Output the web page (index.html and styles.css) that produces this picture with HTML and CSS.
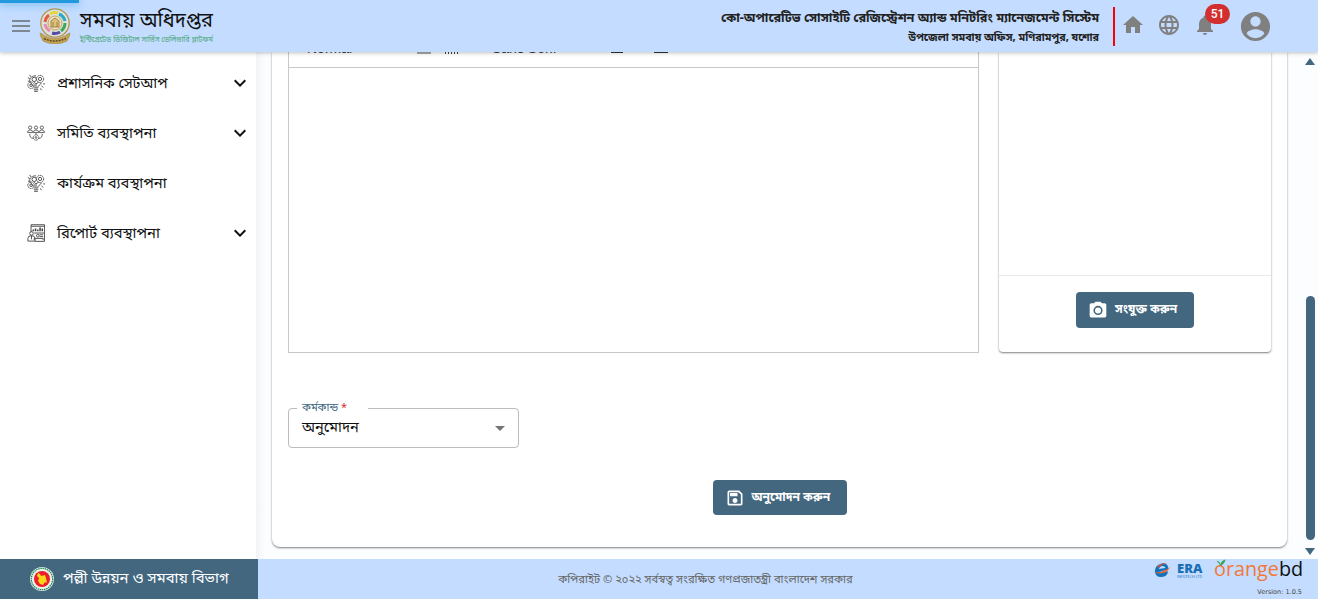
FILE: index.html
```html
<!DOCTYPE html>
<html lang="bn">
<head>
<meta charset="utf-8">
<title>সমবায় অধিদপ্তর</title>
<link rel="stylesheet" href="styles.css">
</head>
<body>
<svg class="defs" width="0" height="0">
  <symbol id="idea" viewBox="0 0 20 20"><g fill="none" stroke="#444" stroke-width="1"><path d="M7 14c0-3-4-3-4-7 0-3 3-5 7-5M8 19.300h4M7.500 17.500h5M7.500 15.500h5M12 15c0-2 3-3 4-5M10 15v-4l-2-2M10 11l3-2"/><circle cx="14.500" cy="5.500" r="4" stroke-dasharray="2 .6"/><circle cx="14.500" cy="5.500" r="1.800"/><circle cx="4.500" cy="12.500" r="3.600" stroke-dasharray="2 .6"/><circle cx="4.500" cy="12.500" r="1.400"/><circle cx="8" cy="6" r="2.400"/><path d="M1 4l2 1M3 1l1 2M1 8h2M16 13l2 2M15 16l1 2M18 11h2"/></g></symbol>
  <symbol id="chev" viewBox="0 0 24 24"><path d="M7.410 8.590 12 13.170l4.590-4.580L18 10l-6 6-6-6z" fill="#111"/></symbol>
</svg>
<header class="top">
  <div class="progress"></div>
  <svg class="menu" viewBox="0 0 18 12"><path d="M0 1h18M0 6h18M0 11h18" stroke="#7f8790" stroke-width="2"/></svg>
  <svg class="seal" viewBox="0 0 32 36">
    <circle cx="16" cy="15" r="14.200" fill="#dce3df" stroke="#b7964b" stroke-width="1.300"/>
    <g fill="none" stroke-width="3"><path d="M6 14a10 10 0 0 1 4-7" stroke="#e55b3a"/><path d="M11 6a10 10 0 0 1 8-1" stroke="#e8d63b"/><path d="M20 6a10 10 0 0 1 6 7" stroke="#28a9c8"/><path d="M26 15a10 10 0 0 1-4 8" stroke="#3fa65b"/><path d="M21 24a10 10 0 0 1-8 1" stroke="#574ba5"/><path d="M11 23a10 10 0 0 1-5-7" stroke="#e98bad"/></g>
    <circle cx="16" cy="15" r="7" fill="#e6dfc8" stroke="#c9a75b"/><path d="M12 19v-6l4-3 4 3v6zM14 19v-5M18 19v-5" fill="#dfc078" stroke="#a58645"/>
    <path d="M1 25q3 1 5 3 10 5 20 0 2-2 5-3l-1 4-2 4q-12 6-24 0l-2-4z" fill="#c6a350" stroke="#a98a45" stroke-width=".7"/><path d="M5 30.500q11 5 22 0" stroke="#5b4826" stroke-width="1.500" stroke-dasharray="2 1" fill="none"/>
  </svg>
  <div class="brand"><div class="brand-name">সমবায় অধিদপ্তর</div><div class="brand-sub">ইন্টিগ্রেটেড ডিজিটাল সার্ভিস ডেলিভারি প্লাটফর্ম</div></div>
  <div class="office"><div class="office-a">কো-অপারেটিভ সোসাইটি রেজিস্ট্রেশন অ্যান্ড মনিটরিং ম্যানেজমেন্ট সিস্টেম</div><div class="office-b">উপজেলা সমবায় অফিস, মণিরামপুর, যশোর</div></div>
  <div class="rule"></div>
  <svg class="ic home" viewBox="0 0 24 24"><path d="M10 20v-6h4v6h5v-8h3L12 3 2 12h3v8z"/></svg>
  <svg class="ic globe" viewBox="0 0 24 24"><path d="M11.99 2C6.47 2 2 6.48 2 12s4.47 10 9.99 10C17.52 22 22 17.52 22 12S17.52 2 11.99 2zm6.93 6h-2.95c-.32-1.25-.78-2.45-1.38-3.56 1.84.63 3.37 1.91 4.33 3.56zM12 4.04c.83 1.2 1.48 2.53 1.91 3.96h-3.82c.43-1.43 1.08-2.76 1.91-3.96zM4.26 14C4.1 13.36 4 12.69 4 12s.1-1.36.26-2h3.38c-.08.66-.14 1.32-.14 2s.06 1.34.14 2H4.26zm.82 2h2.95c.32 1.25.78 2.45 1.38 3.56-1.84-.63-3.37-1.9-4.33-3.56zm2.95-8H5.08c.96-1.66 2.49-2.93 4.33-3.56C8.81 5.55 8.35 6.75 8.03 8zM12 19.96c-.83-1.2-1.48-2.53-1.91-3.96h3.82c-.43 1.43-1.08 2.76-1.91 3.96zM14.34 14H9.66c-.09-.66-.16-1.32-.16-2s.07-1.35.16-2h4.68c.09.65.16 1.32.16 2s-.07 1.34-.16 2zm.25 5.56c.6-1.11 1.06-2.31 1.38-3.56h2.95c-.96 1.65-2.49 2.93-4.33 3.56zM16.36 14c.08-.66.14-1.32.14-2s-.06-1.34-.14-2h3.38c.16.64.26 1.31.26 2s-.1 1.36-.26 2h-3.38z"/></svg>
  <div class="bell"><svg class="ic" viewBox="0 0 24 24"><path d="M12 22c1.1 0 2-.9 2-2h-4c0 1.1.89 2 2 2zm6-6v-5c0-3.07-1.64-5.64-4.5-6.32V4c0-.83-.67-1.5-1.5-1.5s-1.5.67-1.5 1.5v.68C7.63 5.36 6 7.92 6 11v5l-2 2v1h16v-1l-2-2z"/></svg><span class="badge">51</span></div>
  <svg class="ic user" viewBox="0 0 24 24"><path d="M12 2C6.48 2 2 6.48 2 12s4.48 10 10 10 10-4.48 10-10S17.52 2 12 2zm0 3c1.920 0 3.500 1.580 3.500 3.500S13.920 12 12 12s-3.500-1.580-3.500-3.500S10.080 5 12 5zm0 15c-2.500 0-4.710-1.180-6-3.020.03-1.990 4-3.080 6-3.080 1.990 0 5.970 1.090 6 3.080C16.710 18.820 14.500 20 12 20z"/></svg>
</header>
<div class="body">
  <nav class="side">
    <div class="item"><svg class="nicon"><use href="#idea"/></svg><span class="n1">প্রশাসনিক সেটআপ</span><svg class="chev"><use href="#chev"/></svg></div>
    <div class="item"><svg class="nicon" viewBox="0 0 20 20"><g fill="none" stroke="#555"><circle cx="3.500" cy="4" r="1.800"/><circle cx="10" cy="4" r="1.800"/><circle cx="16.500" cy="4" r="1.800"/><path d="M.7 9.500V8q2.800-3 5.600 0v1.500zM7.200 9.500V8q2.800-3 5.600 0v1.500zM13.700 9.500V8q2.800-3 5.600 0v1.500z"/><path d="M3 11q0 5 4 5M17 11q0 5-4 5M10 10v2"/><circle cx="10" cy="15" r="3" stroke-dasharray="2 .5"/><circle cx="10" cy="15" r="1"/></g></svg><span>সমিতি ব্যবস্থাপনা</span><svg class="chev"><use href="#chev"/></svg></div>
    <div class="item"><svg class="nicon"><use href="#idea"/></svg><span>কার্যক্রম ব্যবস্থাপনা</span></div>
    <div class="item"><svg class="nicon" viewBox="0 0 20 20"><g fill="none" stroke="#444"><path d="M4.500 9V.8h15v18.500H9M4.500 2.500h15M8 10h11M8 18v-2h10v2"/><path d="M7 8V6M9.500 8V5M12 8V6M14.500 8V4M17 8V5" stroke-width="1.700"/><circle cx="5" cy="10.500" r="2"/><path d="M1 19v-3q0-3 4-3t4 3v3zM5 13v4"/><circle cx="12" cy="13" r="1.500"/><path d="M14 12h4M14 14h4"/></g></svg><span>রিপোর্ট ব্যবস্থাপনা</span><svg class="chev"><use href="#chev"/></svg></div>
  </nav>
  <main class="main">
    <section class="card">
      <div class="row">
        <div class="editor"><div class="tools"><span class="t1">Normal</span><i class="b1"></i><i class="b2"></i><span class="t2">Sans Serif</span><i class="b3"></i><i class="b4"></i></div><div class="page"></div></div>
        <div class="attach"><div class="preview"></div><div class="attach-foot"><button class="btn a"><svg viewBox="0 0 24 24"><path fill="#fff" fill-rule="evenodd" d="M9 2 7.170 4H4c-1.100 0-2 .9-2 2v13c0 1.100.9 2 2 2h16c1.100 0 2-.9 2-2V6c0-1.100-.9-2-2-2h-3.170L15 2H9zm3 5a5.500 5.500 0 1 1 0 11 5.500 5.500 0 0 1 0-11z"/><circle cx="12" cy="12.500" r="3.600" fill="#fff"/></svg><span>সংযুক্ত করুন</span></button></div></div>
      </div>
      <fieldset class="select"><legend><span>কর্মকান্ড <b>*</b></span></legend><span class="val">অনুমোদন</span><i class="arrow"></i></fieldset>
      <div class="submit"><button class="btn s"><svg viewBox="0 0 24 24"><path fill="#fff" d="M17 3H5a2 2 0 0 0-2 2v14c0 1.100.9 2 2 2h14c1.100 0 2-.9 2-2V7l-4-4zm2 16H5V5h11.170L19 7.830V19zm-7-7c-1.660 0-3 1.340-3 3s1.340 3 3 3 3-1.340 3-3-1.340-3-3-3zM6 6h9v4H6z"/></svg><span>অনুমোদন করুন</span></button></div>
    </section>
    <div class="scroll"><i class="up"></i><i class="thumb"></i><i class="down"></i></div>
  </main>
</div>
<footer class="foot">
  <div class="dept"><svg viewBox="0 0 24 24"><circle cx="12" cy="12" r="12" fill="#e7f2e9"/><circle cx="12" cy="12" r="10.700" fill="none" stroke="#238657" stroke-width="1.300" stroke-dasharray="1.500 .7"/><circle cx="12" cy="12" r="8" fill="#ed1c2e"/><path d="M8 6l2 1 1 2 4-1 1 3 1 5-2-1-2 3-3-1-2-3 1-3-2-2z" fill="#f9d616"/></svg><span>পল্লী উন্নয়ন ও সমবায় বিভাগ</span></div>
  <div class="copy"><span>কপিরাইট © ২০২২ সর্বস্বত্ব সংরক্ষিত গণপ্রজাতন্ত্রী বাংলাদেশ সরকার</span></div>
  <div class="partners">
    <div class="logos">
      <svg class="era" viewBox="0 0 18 16"><path d="M2 9Q2 3 9 1q8-1 7 7L6 9.500h10q-1 6-8 6-5 0-6-6z" fill="#1473b8"/><path d="M6 7q2-4 5-3 2 0 2 2z" fill="#c3dcff"/><path d="M4 6Q7 0 15 1q-5 0-7 3z" fill="#e84e2c"/><path d="M0 10.500q11 1 18-6-4 10-18 6z" fill="#f26532"/></svg>
      <div class="era-name"><b>ERA</b><small>INFOTECH LTD</small></div>
      <div class="orange"><span>orange</span><em>bd</em><svg viewBox="0 0 10 7"><path d="M5 7Q4 3 1 2M5 6q0-4 4-5-1 4-4 5" fill="#35a65a" stroke="#35a65a"/></svg></div>
    </div>
    <div class="version">Version: 1.0.5</div>
  </div>
</footer>
</body>
</html>
```
FILE: styles.css
```css
* { box-sizing: border-box; }
body { margin: 0; height: 599px; overflow: hidden; display: flex; flex-direction: column; background: #fcfdff; font-family: "Noto Sans Bengali", "Noto Sans", "Liberation Sans", sans-serif; color: #111; }
.defs { position: absolute; }
span, .brand-name, .brand-sub, .office div { white-space: nowrap; }
.top { position: relative; z-index: 2; height: 52px; flex: none; display: flex; align-items: center; background: #c3dcff; box-shadow: 0 1px 4px rgba(0,0,0,.25); padding-left: 12px; }
.progress { position: absolute; left: 0; top: 0; width: 79px; height: 3px; background: #2299dd; box-shadow: 0 0 8px #2299dd; }
.menu { width: 18px; height: 12px; flex: none; }
.seal { width: 32px; height: 36px; margin-left: 9px; flex: none; }
.brand { margin-left: 9px; width: 134px; line-height: 1; padding-top: 4px; }
.brand-name { font-size: 20px; line-height: 25px; }
.brand-sub { font-size: 7.25px; line-height: 11px; color: #4aa578; }
.office { margin-left: auto; text-align: right; font-weight: 700; color: #222; width: 400px; padding-top: 3px; }
.office-a { font-size: 12.65px; line-height: 20px; }
.office-b { font-size: 10.7px; line-height: 18px; }
.rule { width: 2px; height: 39px; background: #f00; margin-left: 14px; flex: none; }
.ic { width: 24px; height: 24px; fill: #808080; flex: none; display: block; }
.home { margin-left: 6px; margin-bottom: 2px; }
.globe { margin-left: 12px; margin-bottom: 2px; }
.bell { position: relative; margin-left: 12px; margin-bottom: 2px; }
.badge { position: absolute; left: 12px; top: -9px; width: 25px; height: 20px; border-radius: 10px; background: #d32f2f; color: #fff; font: 500 12px/20px Roboto, sans-serif; text-align: center; }
.user { width: 35px; height: 35px; margin: 0 45px 0 21px; }
.body { height: 507px; flex: none; display: flex; }
.side { width: 256px; background: #fff; padding-top: 6px; flex: none; }
.item { height: 50px; display: flex; align-items: center; padding: 0 4px 0 27px; font-size: 14.8px; }
.item span { padding-top: 2px; }
.item .n1 { font-size: 14.4px; }
.nicon { width: 18px; height: 18px; margin-right: 12px; flex: none; }
.chev { width: 24px; height: 24px; margin-left: auto; }
.main { flex: 1; display: flex; padding-left: 16px; background: linear-gradient(90deg, #f1f3f6, #fcfdff 9px); }
.card { width: 1015px; height: 495px; background: #fff; border-radius: 0 0 8px 8px; box-shadow: 0 1px 2px rgba(0,0,0,.5); padding: 0 16px; }
.row { display: flex; gap: 20px; height: 301px; }
.editor { width: 691px; border: 1px solid #c8c8c8; border-top: 0; }
.tools { height: 16px; border-bottom: 1px solid #c8c8c8; display: flex; align-items: flex-start; padding-left: 18px; color: #333; font: 14px/16px "Liberation Sans", sans-serif; }
.tools span { margin-top: -12px; flex: none; }
.t1 { width: 52px; }
.t2 { width: 75px; margin-left: 32px; }
.b1, .b2, .b3, .b4 { height: 1px; flex: none; }
.b1 { width: 14px; height: 2px; background: #aaa; margin-left: 58px; }
.b2 { width: 15px; height: 2px; background: repeating-linear-gradient(90deg, #444 0 1px, transparent 1px 3px); margin-left: 14px; }
.b3 { width: 12px; background: #333; margin-left: 44px; }
.b4 { width: 14px; background: #333; margin-left: 31px; }
.attach { width: 272px; height: 300px; border-radius: 0 0 4px 4px; box-shadow: 0 1px 2px rgba(0,0,0,.5); }
.preview { height: 224px; border-bottom: 1px solid #e9e9e9; }
.attach-foot { padding-top: 16px; display: flex; justify-content: center; }
.btn { border: 0; border-radius: 4px; background: #42677f; color: #fff; display: flex; align-items: center; padding: 0 0 0 12px; font: 700 12px/20px "Noto Sans Bengali", "Noto Sans", sans-serif; }
.btn svg { width: 20px; height: 20px; margin-right: 7px; flex: none; }
.a { width: 118px; height: 36px; }
.s { width: 134px; height: 35px; }
.select { width: 231px; height: 46px; margin: 49px 0 0; border: 1px solid #bcbcbc; border-radius: 4px; padding: 0 13px 5px 13px; display: flex; align-items: center; min-width: 0; }
.select legend { width: 71px; margin-left: -5px; padding: 0 5px; height: 13px; line-height: 13px; font-size: 11px; color: #42677f; }
.select b { color: #d32f2f; font-weight: 400; }
.val { font-size: 14.6px; line-height: 22px; }
.arrow { margin-left: auto; border: 5px solid transparent; border-top-color: #757575; border-bottom: 0; }
.submit { margin-top: 32px; display: flex; justify-content: center; }
.scroll { width: 10px; margin-left: 18px; padding-top: 6px; display: flex; flex-direction: column; align-items: center; }
.up, .down { border: 5px solid transparent; }
.up { border-bottom: 7px solid #42677f; border-top: 0; }
.thumb { width: 9px; height: 244px; margin-top: 231px; background: #42677f; border-radius: 5px; }
.down { border-top: 7px solid #42677f; border-bottom: 0; margin-top: 8px; }
.foot { height: 40px; flex: none; display: flex; background: #c3dcff; }
.dept { width: 258px; background: #42677f; color: #fff; display: flex; align-items: center; padding-left: 30px; font-size: 14.9px; flex: none; }
.dept svg { width: 24px; height: 24px; margin-right: 9px; flex: none; }
.copy { flex: 1; display: flex; justify-content: center; align-items: center; padding-top: 2px; font-size: 11.2px; color: #666; }
.partners { width: 165px; flex: none; padding-right: 16px; }
.logos { display: flex; height: 26px; align-items: flex-start; }
.era { width: 17px; height: 16px; margin-top: 3px; flex: none; }
.era-name { width: 44px; padding: 3px 0 0 7px; font: 700 13px/12px "Open Sans", sans-serif; color: #1b70b5; flex: none; }
.era-name b { display: block; }
.era-name small { display: block; font-size: 3.7px; line-height: 5px; font-weight: 400; white-space: nowrap; }
.orange { position: relative; display: flex; font: 19.8px/20px "Open Sans", sans-serif; color: #f37836; }
.orange em { font-style: normal; color: #111; }
.orange svg { position: absolute; left: 2px; top: 0; width: 10px; height: 7px; }
.version { text-align: right; font: 6.5px/14px "DejaVu Sans", sans-serif; color: #444; }
```
